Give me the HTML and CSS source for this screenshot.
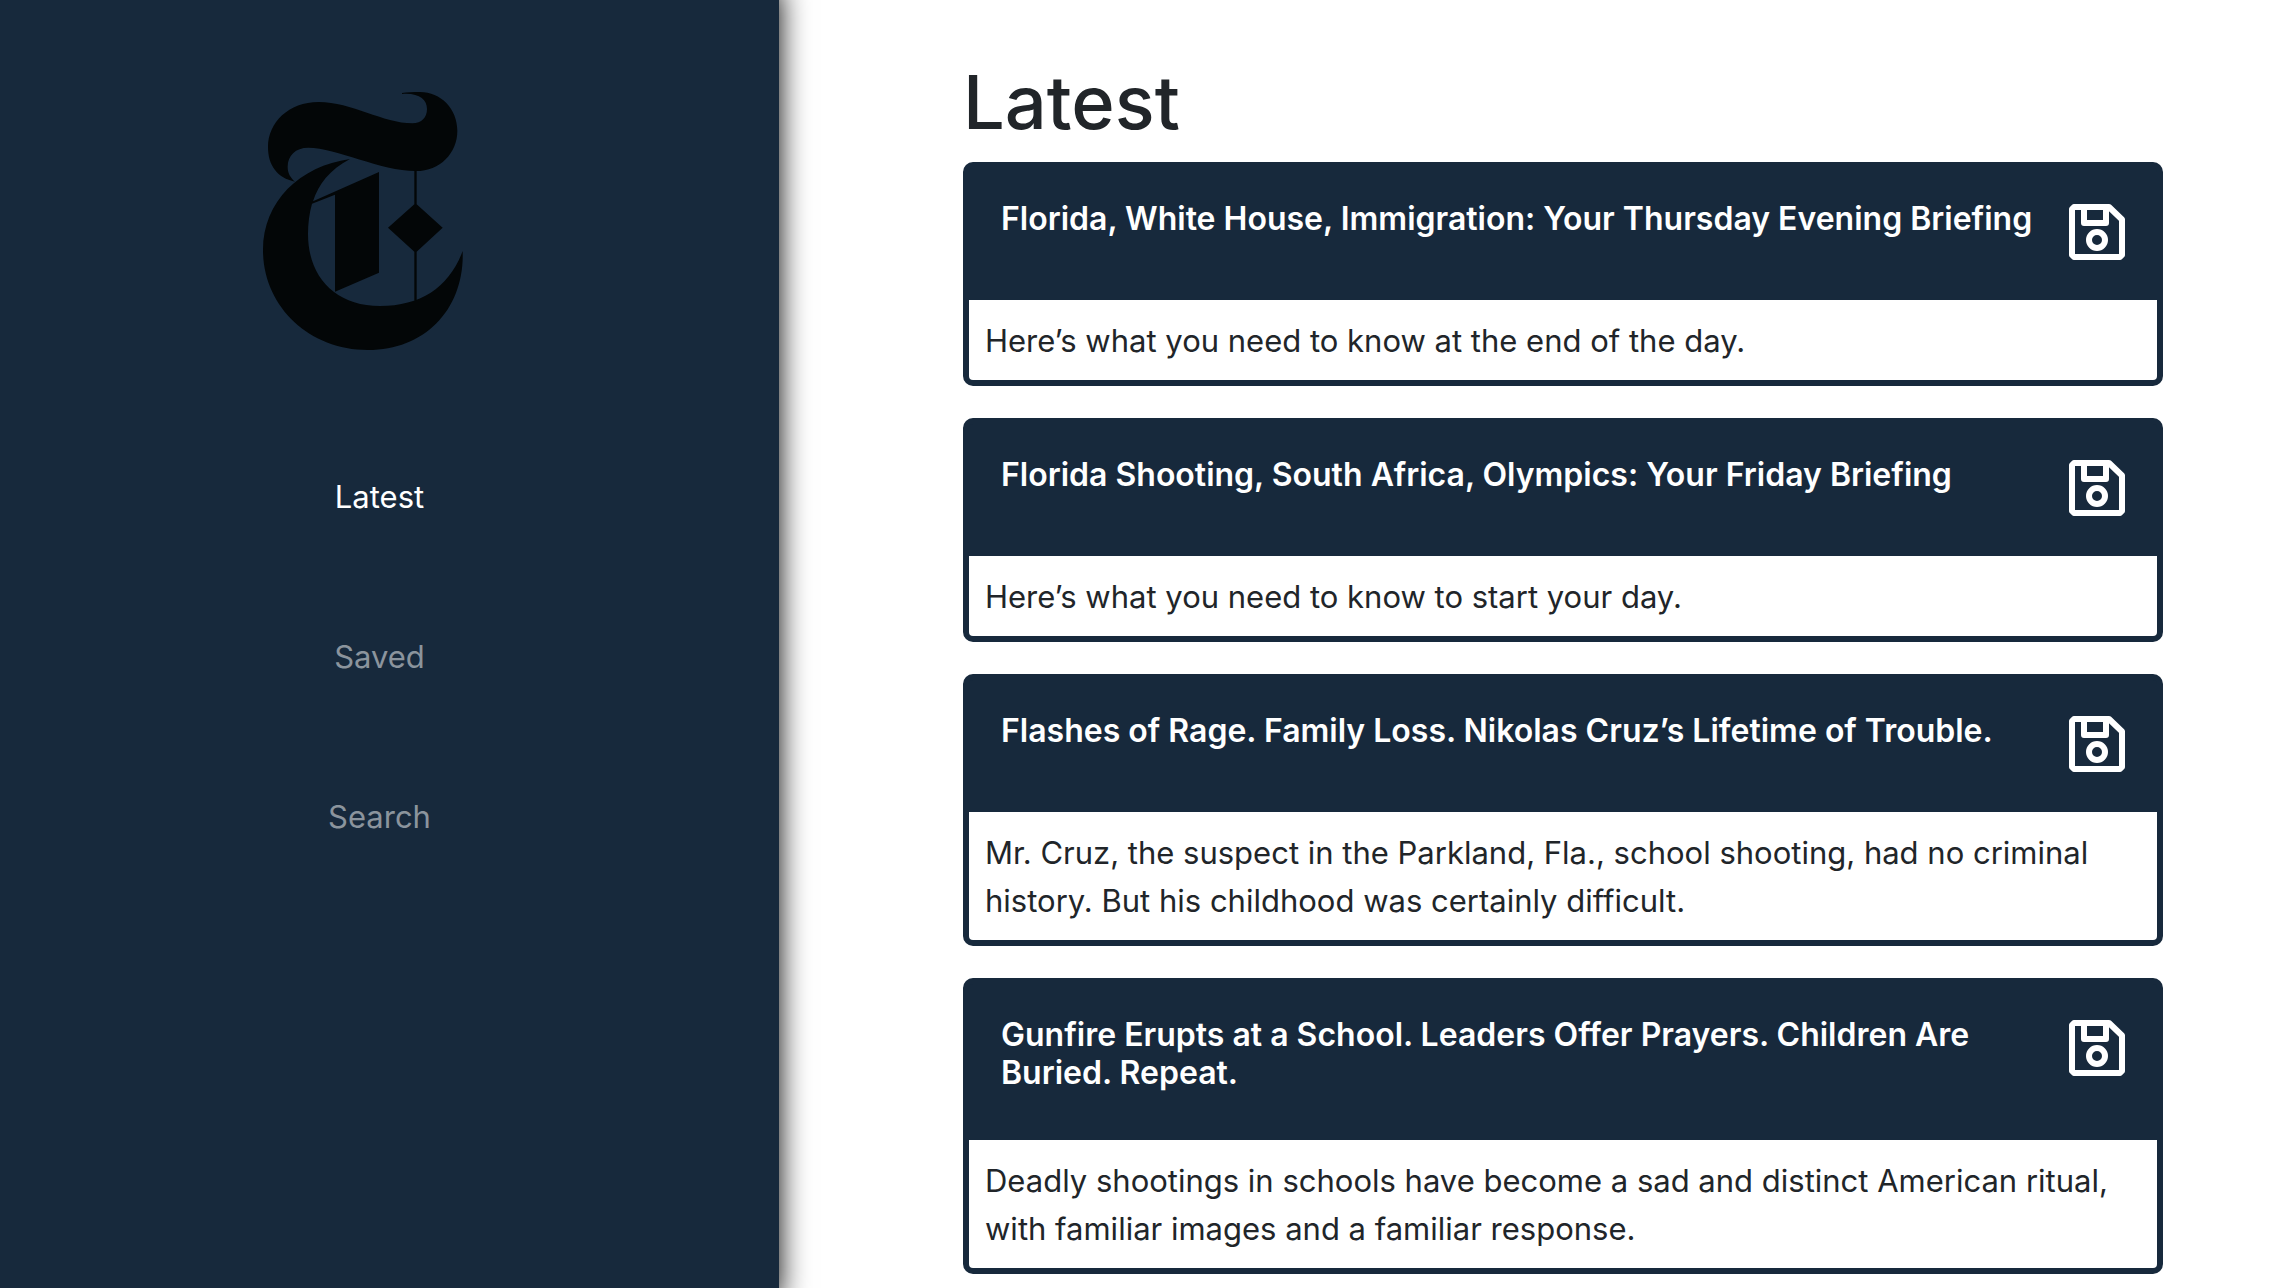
FILE: index.html
```html
<!DOCTYPE html>
<html lang="en">
<head>
<meta charset="utf-8">
<title>Latest</title>
<link rel="stylesheet" href="styles.css">
</head>
<body>
<svg class="symbols" aria-hidden="true">
  <symbol id="save" viewBox="0 0 56 56">
    <path fill="none" stroke="currentColor" stroke-width="6" stroke-linejoin="round" d="M5 3H40L53 15.500V51L51 53H5L3 51V5Z M15 3V19H37V3"/>
    <circle cx="28" cy="36" r="8" fill="none" stroke="currentColor" stroke-width="6"/>
  </symbol>
</svg>
<div class="layout">
  <aside class="sidebar">
    <svg class="logo" viewBox="69 66 600 774" role="img" aria-label="The New York Times">
      <path d="M486 69C500 66 520 66 540 66C602 66 652 116 652 182C652 249 600 303 528 303C420 303 290 233 205 233C166 233 143 257 143 290C143 310 151 322 165 335C112 324 84 286 84 231C84 158 146 96 236 96C335 96 430 160 517 160C545 160 561 142 561 117C561 88 536 68 486 72Z"/>
      <path d="M330 267C268 300 236 342 219 394L417 306V608L285 665V374L216 401C208 430 204 460 204 492C204 620 285 708 420 708C545 708 628 650 668 543C674 716 556 840 384 840C204 840 69 706 69 540C69 394 180 288 330 267Z"/>
      <path d="M523 300H530V403L608 473L530 545V692H523V545L444 473L523 403Z"/>
    </svg>
    <nav class="menu">
      <a class="menu-link active" href="#latest">Latest</a>
      <a class="menu-link" href="#saved">Saved</a>
      <a class="menu-link" href="#search">Search</a>
    </nav>
  </aside>
  <main class="content" id="latest">
    <h1 class="page-title">Latest</h1>
    <article class="card">
      <header class="card-header">
        <h2 class="card-title">Florida, White House, Immigration: Your Thursday Evening Briefing</h2>
        <button class="save" type="button" aria-label="Save"><svg class="icon"><use href="#save"/></svg></button>
      </header>
      <p class="card-text">Here’s what you need to know at the end of the day.</p>
    </article>
    <article class="card">
      <header class="card-header">
        <h2 class="card-title">Florida Shooting, South Africa, Olympics: Your Friday Briefing</h2>
        <button class="save" type="button" aria-label="Save"><svg class="icon"><use href="#save"/></svg></button>
      </header>
      <p class="card-text">Here’s what you need to know to start your day.</p>
    </article>
    <article class="card">
      <header class="card-header">
        <h2 class="card-title">Flashes of Rage. Family Loss. Nikolas Cruz’s Lifetime of Trouble.</h2>
        <button class="save" type="button" aria-label="Save"><svg class="icon"><use href="#save"/></svg></button>
      </header>
      <p class="card-text">Mr. Cruz, the suspect in the Parkland, Fla., school shooting, had no criminal history. But his childhood was certainly difficult.</p>
    </article>
    <article class="card">
      <header class="card-header">
        <h2 class="card-title">Gunfire Erupts at a School. Leaders Offer Prayers. Children Are Buried. Repeat.</h2>
        <button class="save" type="button" aria-label="Save"><svg class="icon"><use href="#save"/></svg></button>
      </header>
      <p class="card-text">Deadly shootings in schools have become a sad and distinct American ritual, with familiar images and a familiar response.</p>
    </article>
  </main>
</div>
</body>
</html>
```
FILE: styles.css
```css
* {
  box-sizing: border-box;
}

body {
  margin: 0;
  background: #fff;
  color: #212529;
  font-family: Inter, "Liberation Sans", sans-serif;
  font-size: 31px;
  line-height: 48px;
}

.symbols {
  display: none;
}

.layout {
  display: grid;
  grid-template-columns: 779fr 1517fr;
  min-height: 100vh;
}

.sidebar {
  display: flex;
  flex-direction: column;
  align-items: center;
  padding: 92px 20px 0 0;
  background: #17293c;
  box-shadow: -12px 0 28px 12px #000;
}

.logo {
  width: 200px;
  height: 258px;
  margin-right: 34px;
  fill: #030607;
}

.menu {
  display: flex;
  flex-direction: column;
  align-items: center;
  gap: 112px;
  margin-top: 123px;
}

.menu-link {
  color: #8b949d;
  text-decoration: none;
}

.menu-link.active {
  color: #fff;
}

.content {
  display: flex;
  flex-direction: column;
  gap: 32px;
  padding: 54px 133px 14px 184px;
}

.page-title {
  margin: 0 0 -20px;
  font-size: 74px;
  font-weight: 500;
  line-height: 96px;
}

.card {
  border: 6px solid #17293c;
  border-radius: 10px;
  background: #17293c;
}

.card-header {
  display: flex;
  justify-content: space-between;
  gap: 16px;
  padding: 32px;
  color: #fff;
}

.card-title {
  margin: 0 0 16px;
  font-size: 32px;
  font-weight: 600;
  line-height: 38px;
}

.save {
  flex: none;
  height: 68px;
  padding: 4px 0 8px;
  border: 0;
  background: none;
  color: inherit;
  cursor: pointer;
}

.icon {
  display: block;
  width: 56px;
  height: 56px;
}

.card-text {
  margin: 0;
  padding: 17px 16px 15px;
  border-radius: 0 0 4px 4px;
  background: #fff;
}
```
